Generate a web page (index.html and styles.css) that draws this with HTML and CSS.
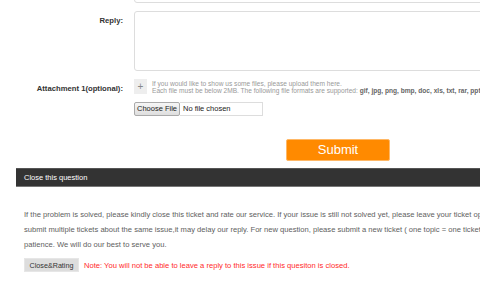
FILE: index.html
```html
<!DOCTYPE html>
<html>
<head>
<meta charset="utf-8">
<link rel="stylesheet" href="styles.css">
</head>
<body>
<div class="page">
  <div class="form">
    <div class="row row-top">
      <div class="label"></div>
      <div class="field"><div class="input"></div></div>
    </div>
    <div class="row row-reply">
      <div class="label">Reply:</div>
      <div class="field"><div class="textarea"></div></div>
    </div>
    <div class="row row-attach">
      <div class="label">Attachment 1(optional):</div>
      <div class="field">
        <div class="attach">
          <div class="plus">+</div>
          <div class="hint">
            <div>If you would like to show us some files, please upload them here.</div>
            <div>Each file must be below 2MB. The following file formats are supported: <b>gif, jpg, png, bmp, doc, xls, txt, rar, ppt, pdf</b></div>
          </div>
        </div>
        <div class="file">
          <span class="file-btn">Choose File</span><span class="file-name">No file chosen</span>
        </div>
      </div>
    </div>
    <div class="submit-row"><div class="submit">Submit</div></div>
  </div>
  <div class="bar">Close this question</div>
  <div class="close-body">
    <p class="desc">If the problem is solved, please kindly close this ticket and rate our service. If your issue is still not solved yet, please leave your ticket open and we will get back to you soon. Please do not<br>submit multiple tickets about the same issue,it may delay our reply. For new question, please submit a new ticket ( one topic = one ticket ). Thanks for your<br>patience. We will do our best to serve you.</p>
    <div class="actions">
      <span class="close-btn">Close&amp;Rating</span>
      <span class="note">Note: You will not be able to leave a reply to this issue if this quesiton is closed.</span>
    </div>
  </div>
</div>
</body>
</html>
```

FILE: styles.css
```css
html, body {
  margin: 0;
  padding: 0;
  background: #fff;
  overflow: hidden;
}
.page {
  width: 480px;
  height: 287px;
  overflow: hidden;
  font-family: "Liberation Sans", Arial, sans-serif;
}
.form {
  width: 900px;
  margin-top: -19px;
}
.row {
  display: flex;
  gap: 11px;
}
.label {
  width: 123px;
  flex: none;
  text-align: right;
  font-weight: bold;
  font-size: 7.7px;
  color: #333;
}
.field {
  flex: none;
  width: 420px;
}
.input {
  height: 22px;
  border: 1px solid #ddd;
  border-radius: 3px;
  box-sizing: border-box;
}
.row-reply {
  margin-top: 8px;
}
.row-reply .label {
  padding-top: 5px;
}
.textarea {
  height: 60px;
  border: 1px solid #ddd;
  border-radius: 3px;
  box-sizing: border-box;
}
.row-attach {
  margin-top: 8px;
}
.row-attach .label {
  line-height: 16px;
  padding-top: 2px;
}
.attach {
  display: flex;
  gap: 5px;
  align-items: center;
}
.plus {
  width: 13px;
  height: 15px;
  background: #eee;
  color: #888;
  font-size: 10px;
  line-height: 15px;
  text-align: center;
  flex: none;
}
.hint {
  font-size: 6.6px;
  line-height: 7px;
  color: #999;
  white-space: nowrap;
}
.hint b {
  color: #666;
}
.file {
  margin-top: 8px;
  display: flex;
  height: 14px;
  font-size: 7.5px;
}
.file-btn {
  box-sizing: border-box;
  width: 46px;
  height: 14px;
  line-height: 12px;
  text-align: center;
  border: 1px solid #aaa;
  background: linear-gradient(#f6f6f6, #dedede);
  color: #222;
  border-radius: 2px;
}
.file-name {
  box-sizing: border-box;
  width: 83px;
  height: 14px;
  line-height: 12px;
  padding-left: 3px;
  border: 1px solid #ddd;
  border-left: none;
  color: #222;
}
.submit-row {
  margin-top: 23px;
  padding-left: 286px;
}
.submit {
  width: 104px;
  height: 22px;
  box-sizing: border-box;
  background: #ff8a00;
  border: 1px solid #ffb866;
  border-radius: 2px;
  color: #fff;
  font-size: 13px;
  line-height: 20px;
  text-align: center;
}
.bar {
  margin: 7px 0 0 16px;
  width: 600px;
  height: 19px;
  box-sizing: border-box;
  background: #333;
  border-top: 1px solid #555;
  border-bottom: 1px solid #777;
  color: #fff;
  font-size: 7.5px;
  line-height: 17px;
  padding-left: 8px;
}
.close-body {
  padding: 20px 0 0 24px;
  width: 900px;
}
.desc {
  margin: 0;
  font-size: 7.6px;
  line-height: 15px;
  color: #5e5e5e;
  white-space: nowrap;
}
.actions {
  margin-top: 6px;
  display: flex;
  align-items: center;
  gap: 5px;
}
.close-btn {
  box-sizing: border-box;
  width: 55px;
  height: 14px;
  line-height: 13px;
  text-align: center;
  font-size: 7.2px;
  color: #333;
  background: #ddd;
  border: 1px solid #e6e6e6;
}
.note {
  font-size: 7.6px;
  color: #ff2a2a;
}
```
